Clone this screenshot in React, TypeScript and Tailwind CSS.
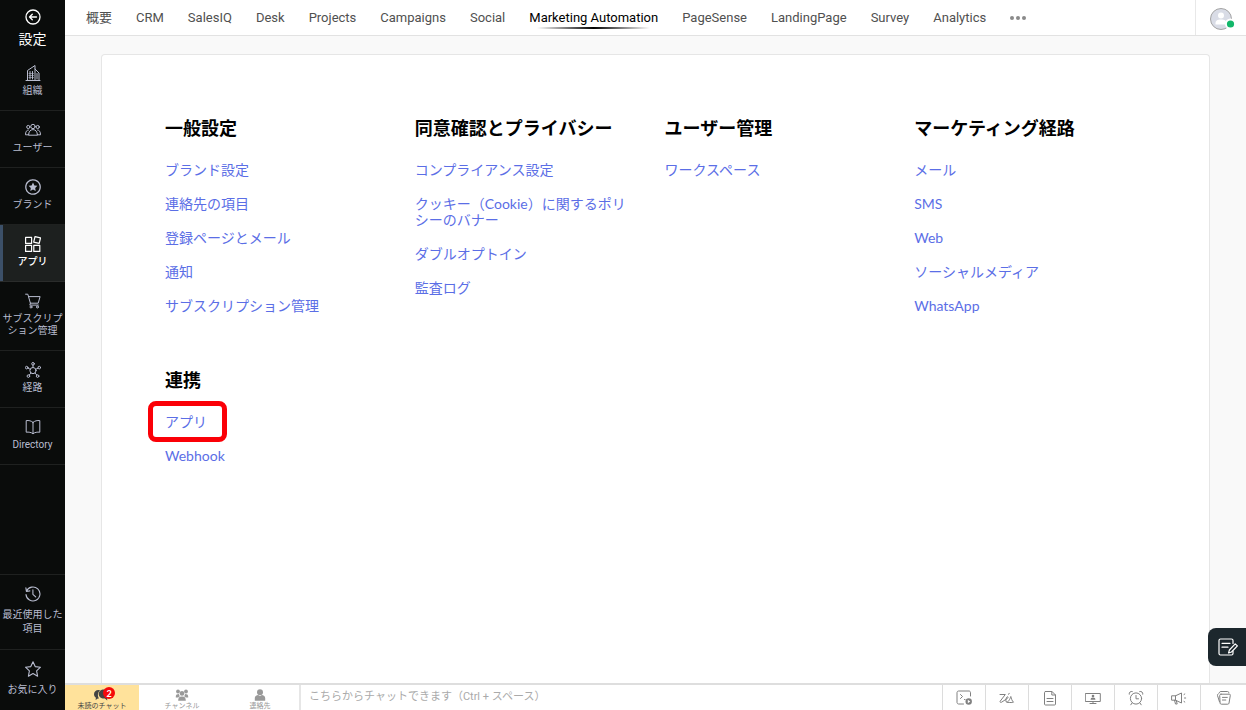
import React from "react";

const IconBase = ({ children, className = "w-4 h-4", width = 1 }: any) => (
  <svg
    viewBox="0 0 16 16"
    className={className}
    fill="none"
    stroke="currentColor"
    strokeWidth={width}
    strokeLinecap="round"
    strokeLinejoin="round"
    aria-hidden="true"
  >
    {children}
  </svg>
);

const BuildingIcon = () => (
  <IconBase>
    <path d="M2.500 15.500V5.500L10 .5v15M10 4l4 4v7.500M1 15.500h14" />
    <path d="M5 6.500v7.500M7.500 6.500v7.500M12 8.500v5.500" />
    <path d="M4 8.500h4.500M4 10.500h4.500M4 12.500h4.500" strokeWidth=".6" />
  </IconBase>
);

const UsersIcon = () => (
  <IconBase>
    <circle cx="8" cy="4.500" r="2.200" />
    <circle cx="3.300" cy="5" r="1.600" />
    <circle cx="12.700" cy="5" r="1.600" />
    <path d="M3.600 12.800c0-3 1.700-5.200 4.400-5.200s4.400 2.200 4.400 5.200zM3.400 8C1.500 8 .5 9.800.5 12.800h3M12.600 8c1.900 0 2.900 1.800 2.900 4.800h-3" />
  </IconBase>
);

const BrandIcon = () => (
  <IconBase>
    <circle cx="8" cy="8" r="7.200" strokeWidth="1.300" strokeDasharray="2.400 .4" />
    <path
      d="M8 3.600l1.400 2.800 3 .4-2.200 2.200.5 3L8 10.600 5.300 12l.5-3-2.200-2.200 3-.4z"
      fill="currentColor"
      stroke="none"
    />
  </IconBase>
);

const AppsIcon = () => (
  <IconBase width={1.2}>
    <rect x="0.6" y="1.4" width="6" height="6" />
    <rect x="0.6" y="9.400" width="6" height="6" />
    <rect x="8.800" y="9.400" width="6" height="6" />
    <path d="M10 .6l5.500 1.300-1.300 5.500-5.500-1.300z" />
  </IconBase>
);

const CartIcon = () => (
  <IconBase>
    <path d="M.6 1.2h2.200l2.600 9h7.800l1.900-6.600H3.500" />
    <path d="M5.400 10.200l-.6 1.900h8.600" />
    <circle cx="6" cy="14" r="1" />
    <circle cx="12.400" cy="14" r="1" />
  </IconBase>
);

const ChannelIcon = () => (
  <IconBase>
    <circle cx="8" cy="8.600" r="3.100" />
    <circle cx="8" cy="1.800" r="1.300" />
    <circle cx="1.700" cy="5.600" r="1.300" />
    <circle cx="14.300" cy="5.600" r="1.300" />
    <circle cx="3.400" cy="14.100" r="1.300" />
    <circle cx="12.600" cy="14.100" r="1.300" />
    <path d="M8 3.100v2.400M2.900 6.100l2.300 1.200M13.100 6.100l-2.300 1.200M4.200 13l1.900-2M11.800 13l-1.900-2" />
  </IconBase>
);

const BookIcon = () => (
  <IconBase>
    <path d="M8 3.400C6.200 1.700 3.700 1.300 1.200 1.600v11.600c2.500-.3 5 .1 6.800 1.500 1.800-1.400 4.300-1.800 6.800-1.500V1.600C12.300 1.300 9.800 1.700 8 3.400zM8 3.400v11.300" />
  </IconBase>
);

const HistoryIcon = () => (
  <IconBase width={1.1}>
    <path d="M1.500 5.300A7 7 0 1 1 1 8.600M.9 1.900l.5 3.600 3.500-.6M7.900 3.800v4.500l2.800 2.600" />
  </IconBase>
);

const StarIcon = () => (
  <IconBase width={1.1}>
    <path d="M8 .7l2.200 4.900 5.300.6-3.900 3.700 1 5.300L8 12.500l-4.600 2.700 1-5.300L.5 6.200l5.300-.6z" />
  </IconBase>
);

const BackIcon = () => (
  <IconBase width={1.3}>
    <circle cx="8" cy="8" r="7" />
    <path d="M11.500 8h-7M7.300 5.200L4.500 8l2.800 2.800" />
  </IconBase>
);

const ChatIcon = () => (
  <svg viewBox="0 0 18 12" className="w-[18px] h-3" fill="currentColor" aria-hidden="true">
    <path d="M5.500 1C2.800 1 1 2.900 1 5.200c0 1.500.7 2.700 1.900 3.500L2.600 11l2.200-1.500c.4 0 .8 0 1.200-.1C4.400 7.200 4.500 3.500 7 1.200 6.500 1 6 1 5.500 1z" />
    <path d="M11 .5C7.800.5 5.700 2.500 5.700 5s2.100 4.500 5.300 4.500l.9-.1 2.300 2.100-.1-2.900c1.300-.8 2.100-2.100 2.100-3.600C16.200 2.500 14.200.5 11 .5z" />
  </svg>
);

const GroupIcon = () => (
  <svg viewBox="0 0 14 12" className="w-[14px] h-3" fill="currentColor" aria-hidden="true">
    <circle cx="3" cy="2.500" r="1.900" />
    <circle cx="11" cy="2.500" r="1.900" />
    <circle cx="7" cy="4.400" r="2.300" />
    <path d="M.8 7.500C.8 5.800 1.800 5 4 5c.2 1.300.6 1.900 1 2.200-.8.300-1.400.7-1.700 1.300H.8zM13.200 7.500C13.200 5.800 12.200 5 10 5c-.2 1.300-.6 1.900-1 2.200.8.300 1.400.7 1.700 1.300h2.500zM3.200 11.700c0-2.700.8-4.200 3.800-4.200s3.800 1.500 3.800 4.200z" />
  </svg>
);

const PersonIcon = () => (
  <svg viewBox="0 0 12 12" className="w-3 h-3" fill="currentColor" aria-hidden="true">
    <circle cx="6" cy="3.200" r="3" />
    <path d="M.8 11.700V9c0-1.700 1.600-2.600 3.400-2.900.5.500 1.100.8 1.800.8s1.300-.3 1.800-.8c1.800.3 3.400 1.200 3.400 2.900v2.700z" />
  </svg>
);

const NoteIcon = () => (
  <svg viewBox="0 0 20 18" className="w-5 h-[18px]" fill="none" stroke="currentColor" strokeWidth="1.200" strokeLinecap="round" strokeLinejoin="round" aria-hidden="true">
    <path d="M15 5.500V2.500A1.500 1.500 0 0 0 13.500 1h-11A1.500 1.500 0 0 0 1 2.500v13A1.500 1.500 0 0 0 2.500 17h11a1.500 1.500 0 0 0 1.500-1.500V13M4 5.300h8M4 9.200h6" />
    <path d="M17.200 5.900l2.200 2L13.500 14l-2.900 1 .8-3z" />
  </svg>
);

const tools = [
  {
    name: "セッション",
    icon: (
      <>
        <path d="M14.500 6V2.800c0-1-.5-1.800-1.500-1.800H2.500C1.600 1 1 1.800 1 2.800v9.400c0 1 .6 1.800 1.500 1.800H7.500" />
        <path d="M4.500 4.500l2 2-2 2M8.500 9.500h.5" />
        <circle cx="12.700" cy="11.500" r="3.200" fill="currentColor" stroke="none" />
        <path d="M11.800 9.800l2.500 1.700-2.500 1.700z" fill="white" stroke="none" />
      </>
    ),
  },
  {
    name: "Zia",
    icon: <path d="M1 4.500h5.300L1.200 11.200c-.5 1 .3 1.400 1.200 1.100L8.300 8.500c1-.9.900-2.100-.1-1.700C6.800 7.800 6.300 11 7.400 12c1.700.9 3.700-3.200 4.400-5.500.5 2 1.200 4.300 2.600 5.600.8.700-5.100.4-6.400.2M9.600 4.300l.6-1" />,
  },
  {
    name: "ファイル",
    icon: <path d="M3.500 1.500H10L13.500 5v9a1 1 0 0 1-1 1h-9a1 1 0 0 1-1-1V2.500a1 1 0 0 1 1-1zM9.800 1.500V5h3.700M5 8.500h6M5 11.500h6" />,
  },
  {
    name: "画面共有",
    icon: (
      <>
        <path d="M.7 3.500h14.600v8H.7zM8 11.500v2M5 13.500h6" />
        <circle cx="8" cy="6" r="1.300" fill="currentColor" stroke="none" />
        <path d="M5.600 9.700c0-1.500.8-2.200 2.400-2.200s2.400.7 2.400 2.200z" fill="currentColor" stroke="none" />
      </>
    ),
  },
  {
    name: "リマインダー",
    icon: (
      <>
        <circle cx="8" cy="8.500" r="5.600" />
        <path d="M8 5.500v3.300h2.500M4 13l-1.200 1.800M12 13l1.200 1.800M1.200 4.200C.8 2.500 2.500.9 4.300 1.500M14.800 4.200c.4-1.700-1.300-3.300-3.100-2.700" />
      </>
    ),
  },
  {
    name: "お知らせ",
    icon: <path d="M1 5.800h3.500L10.500 3v10l-6-2.800H1zM4.500 5.800v4.400M3.500 10.200l1 3.800h1.700l-.9-3.300M13 4.500l.8-.5M13.500 8h1.200M13 11.500l.8.5" />,
  },
  {
    name: "履歴",
    icon: (
      <>
        <path d="M5 4.200h8.300a1 1 0 0 1 1 1.200l-1.300 7.800a1.300 1.300 0 0 1-1.300 1H5.400a1.300 1.300 0 0 1-1.300-1L3.700 5.600c-.1-.8.500-1.400 1.300-1.400zM6.500 7.400h4.800M6.400 10h3.400" />
        <path d="M3.500 11.800L1.500 5.500c-.3-.8.100-1.300.8-1.600M3.200 3l.4-.8c.2-.5.600-.7 1.200-.7h6.700c.7 0 1.100.3 1.200.8v.6" />
      </>
    ),
  },
];

const products = [
  "概要",
  "CRM",
  "SalesIQ",
  "Desk",
  "Projects",
  "Campaigns",
  "Social",
  "Marketing Automation",
  "PageSense",
  "LandingPage",
  "Survey",
  "Analytics",
];

const menu = [
  { label: "組織", icon: <BuildingIcon /> },
  { label: "ユーザー", icon: <UsersIcon /> },
  { label: "ブランド", icon: <BrandIcon /> },
  { label: "アプリ", icon: <AppsIcon />, active: true },
  { label: "サブスクリプション管理", icon: <CartIcon /> },
  { label: "経路", icon: <ChannelIcon /> },
  { label: "Directory", icon: <BookIcon /> },
];

const shortcuts = [
  { label: "最近使用した項目", icon: <HistoryIcon /> },
  { label: "お気に入り", icon: <StarIcon /> },
];

const sections = [
  {
    title: "一般設定",
    links: ["ブランド設定", "連絡先の項目", "登録ページとメール", "通知", "サブスクリプション管理"],
  },
  {
    title: "同意確認とプライバシー",
    links: [
      "コンプライアンス設定",
      "クッキー（Cookie）に関するポリシーのバナー",
      "ダブルオプトイン",
      "監査ログ",
    ],
  },
  { title: "ユーザー管理", links: ["ワークスペース"] },
  {
    title: "マーケティング経路",
    links: ["メール", "SMS", "Web", "ソーシャルメディア", "WhatsApp"],
  },
  { title: "連携", links: ["アプリ", "Webhook"], marked: "アプリ" },
];

const Sidebar = () => (
  <aside className="flex w-[65px] shrink-0 flex-col bg-[#0a0c0b] text-center font-['Roboto','Noto_Sans_CJK_JP',sans-serif] text-[10px] leading-3 text-[#b9bdd0]">
    <button className="flex h-[54px] flex-col items-center gap-1 pt-[9px] text-sm text-white">
      <BackIcon />
      設定
    </button>
    <nav className="flex flex-col">
      {menu.map((item) => (
        <a
          key={item.label}
          href="#"
          className={
            item.active
              ? "flex flex-col items-center gap-1 border-b border-[#2a2c2b] bg-[#1d201f] pt-[11px] pb-[13px] font-medium text-white shadow-[inset_3px_0_0_#3c5068]"
              : "flex flex-col items-center gap-1 border-b border-[#1f2120] pt-[11px] pb-[13px]"
          }
        >
          {item.icon}
          <span className="w-[62px]">{item.label}</span>
        </a>
      ))}
    </nav>
    <div className="mt-auto flex flex-col">
      {shortcuts.map((item) => (
        <a
          key={item.label}
          href="#"
          className="flex flex-col items-center gap-[6px] border-t border-[#1f2120] pt-[11px] pb-[13px] leading-[14px]"
        >
          {item.icon}
          <span className="w-[62px]">{item.label}</span>
        </a>
      ))}
    </div>
  </aside>
);

const Header = () => (
  <header className="flex h-9 items-stretch border-b border-[#e2e2e2] bg-white">
    <nav className="flex flex-1 items-center gap-6 pl-[21px] font-['Roboto','Noto_Sans_CJK_JP',sans-serif] text-[13px] whitespace-nowrap text-[#505050]">
      {products.map((name) =>
        name === "Marketing Automation" ? (
          <a key={name} href="#" className="relative text-black">
            {name}
            <span className="absolute inset-x-2 -bottom-[2px] h-[2px] bg-linear-to-r from-transparent via-black to-transparent" />
          </a>
        ) : (
          <a key={name} href="#">
            {name}
          </a>
        )
      )}
      <button className="flex gap-[2px]" aria-label="その他">
        <span className="h-1 w-1 rounded-full bg-[#8a8a8a]" />
        <span className="h-1 w-1 rounded-full bg-[#8a8a8a]" />
        <span className="h-1 w-1 rounded-full bg-[#8a8a8a]" />
      </button>
    </nav>
    <button className="flex w-[51px] items-center justify-center border-l border-[#e8e8e8] pt-[2px] pl-1" aria-label="プロフィール">
      <svg viewBox="0 0 26 22" className="h-[22px] w-[26px]">
        <circle cx="11" cy="11" r="10.500" fill="#d9dce6" stroke="#a3a3a3" />
        <circle cx="11" cy="7.500" r="3" fill="white" />
        <path d="M5.500 16.500c-.5-4 2-5 5.500-5s6 1 5.500 5z" fill="white" />
        <circle cx="20.500" cy="16" r="5.500" fill="white" />
        <circle cx="20.500" cy="16" r="3.600" fill="#12b76a" />
      </svg>
    </button>
  </header>
);

const Section = ({ section }: any) => (
  <section className="pr-8">
    <h2 className="mb-[22px] text-lg leading-6 font-bold whitespace-nowrap text-black">
      {section.title}
    </h2>
    <ul className="flex flex-col gap-[18px]">
      {section.links.map((link: string) => (
        <li key={link} className="text-sm leading-4">
          <a href="#" className="relative text-[#5b6ee6]">
            {link}
            {section.marked === link && (
              <span className="absolute -inset-y-3 -right-5 -left-[17px] rounded-lg border-[5px] border-[#fb0007]" />
            )}
          </a>
        </li>
      ))}
    </ul>
  </section>
);

const ChatBar = () => (
  <footer className="relative flex h-[27px] border-t-2 border-[#dedede] bg-white text-[7px] leading-[9px] text-[#999]">
    <button className="relative flex w-[74px] flex-col items-center bg-[#ffe29b] pt-1 text-[#444]">
      <ChatIcon />
      未読のチャット
      <span className="absolute top-[2px] left-[38px] flex h-3 w-3 items-center justify-center rounded-full bg-[#f50a0a] text-[9px] font-bold text-white">
        2
      </span>
    </button>
    <div className="grid w-[162px] grid-cols-2 border-r-2 border-[#e6e6e6] pl-1">
      <button className="flex flex-col items-center pt-1">
        <GroupIcon />
        チャンネル
      </button>
      <button className="flex flex-col items-center pt-1">
        <PersonIcon />
        連絡先
      </button>
    </div>
    <input
      type="text"
      aria-label="チャット"
      placeholder="こちらからチャットできます（Ctrl + スペース）"
      className="min-w-0 flex-1 px-2 pb-[2px] font-['Roboto','Noto_Sans_CJK_JP',sans-serif] text-[11px] outline-none placeholder:text-[#aaa]"
    />
    {tools.map((tool) => (
      <button
        key={tool.name}
        aria-label={tool.name}
        className="flex w-[43px] shrink-0 items-center justify-center border-l border-[#dcdcdc] text-[#808080] last:w-[46px]"
      >
        <IconBase>{tool.icon}</IconBase>
      </button>
    ))}
  </footer>
);

const App = () => {
  return (
    <div className="flex min-h-screen bg-[#f9f9f9] font-['Lato','Noto_Sans_CJK_JP',sans-serif]">
      <Sidebar />
      <div className="flex min-w-0 flex-1 flex-col">
        <Header />
        <main className="flex flex-1 flex-col px-9 pt-[18px]">
          <div className="flex-1 rounded-t border border-b-0 border-[#e6e6e6] bg-white pt-[61px] pr-[45px] pl-[63px]">
            <div className="grid grid-cols-4 gap-y-[54px]">
              {sections.map((section) => (
                <Section key={section.title} section={section} />
              ))}
            </div>
          </div>
        </main>
        <ChatBar />
      </div>
      <button
        aria-label="メモ"
        className="fixed right-0 bottom-11 flex h-[38px] w-[38px] items-center justify-center rounded-l-lg bg-[#1c272d] pl-[2px] text-white"
      >
        <NoteIcon />
      </button>
    </div>
  );
};

export default App;
